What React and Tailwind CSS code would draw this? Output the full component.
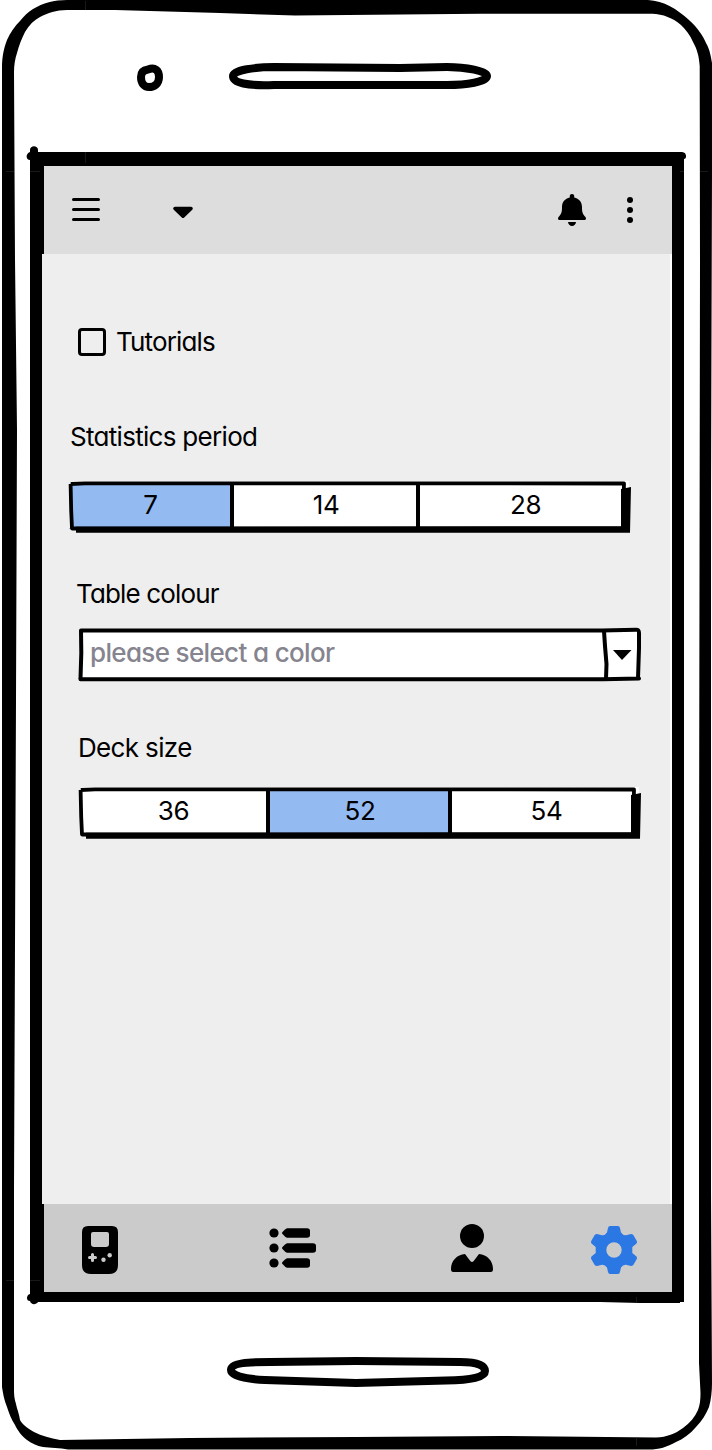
import React from "react";

const FONT = "font-['Inter','Noto_Sans',sans-serif] [font-feature-settings:'cv11']";

function DeviceFrame() {
  return (
    <svg className="absolute inset-0" width="712" height="1450" viewBox="0 0 712 1450" aria-hidden="true">
      <path
        fillRule="evenodd"
        d="M2 68C2 56 4 48 7 40C10 33 15 26 20 21C24 16 28 12 33 9C43 3 54 0 67 0L648 0C664 1 677 9 689 20C698 28 703 36 706 43C710 50 711 57 712 63L712 170L711 500V1190L712 1383C712 1391 711 1400 709 1407C706 1414 702 1421 696 1427C690 1434 683 1439 676 1442C667 1447 659 1449.500 649 1449.500H68C60 1448 50 1448 43 1447C37 1446 31 1443 27 1440C21 1435 18 1431 15 1425C11 1419 9 1413 7 1407C4 1400 3 1393 2 1387Z
        M14 72C14 65 15 59 17 53C19 45 22 38 25 32C29 25 34 20 40 17C48 13 56 10 67 10L115 10L220 13L295 15.500L480 13.700H652C663 14 673 18 681 25C686 30 690 35 693 42C697 49 699 56 699.700 66L700 260L699 900V1363L700.500 1393C700.500 1399 700 1405 698 1410C695 1417 690 1423 683 1428C675 1434 667 1437 656 1437.500L500 1436L356 1437L190 1438L60 1440C50 1438 42 1436 34 1432C27 1428 22 1424 20 1420C19 1413 17 1409 16 1404C14 1398 14 1394 14 1388V1190L16 700L17 430L15 260Z"
      />
      <path d="M30 150C30 145 38 145 38 150V152H682C687 152 687 159 684 159V1302H680V1303H640L600 1302H38C36 1305 31 1305 30 1301C26 1301 26 1295 30 1294V160C26 160 25 154 30 152Z" />
      <path d="M148 69.500C155 67 159 70 159 77C159 84 154 87 149 87C144 87 141 83 141 77C141 72 144 70 148 69.500Z" fill="none" stroke="#000" strokeWidth="8" />
      <path d="M274 67L400 68L447 67C466 67 487 71 487 76C487 82 466 85 447 85L274 85C247 86 233 83 233 76C233 70 256 67 274 67Z" fill="none" stroke="#000" strokeWidth="8" />
      <path d="M270 1362L356 1361L460 1362C478 1362 485 1366 485 1371C485 1377 472 1380 446 1380.500L356 1383L265 1380C243 1379 231 1375 231 1370C231 1363 248 1362 270 1362Z" fill="none" stroke="#000" strokeWidth="8" />
      <path d="M85.500 1V10M6 171.500H14M30 171.500H40M680 171.500H684M700 171.500H708M6 1280.500H14M30 1280.500H40M636.500 1297V1302M636.500 1437V1446M85.500 152V163" stroke="#333" strokeWidth=".5" />
    </svg>
  );
}

function Caret() {
  return (
    <svg width="22" height="14" viewBox="0 0 22 14">
      <path d="M3 2.500H19L11 10.200Z" stroke="#000" strokeWidth="3.600" strokeLinejoin="round" />
    </svg>
  );
}

function TopBar() {
  return (
    <header className="ml-0.5 flex h-[88px] w-[628px] items-center bg-[#ddd] pl-7">
      <svg width="28" height="26" viewBox="0 0 28 26">
        <path d="M1.500 2.500H26.500M1.500 12.500H26.500M1.500 22.500H26.500" stroke="#000" strokeWidth="3" strokeLinecap="round" />
      </svg>
      <div className="ml-[72px] mt-1.5">
        <Caret />
      </div>
      <svg className="ml-[364px]" width="28" height="32" viewBox="0 0 28 32">
        <path d="M14 0C16 0 16.400 1.500 16.200 3.500C21 4.500 24 8 24 13C24 18 24.500 19.500 27 22.500C28.800 24.500 28 26 26 26H2C0 26-.800 24.500 1 22.500C3.500 19.500 4 18 4 13C4 8 7 4.500 11.800 3.500C11.600 1.500 12 0 14 0ZM10 28H18C18 30 16 32 14 32S10 30 10 28Z" />
      </svg>
      <svg className="ml-[41px]" width="6" height="26" viewBox="0 0 6 26">
        <circle cx="3" cy="3" r="3" />
        <circle cx="3" cy="13" r="3" />
        <circle cx="3" cy="23" r="3" />
      </svg>
    </header>
  );
}

function Segments({ cells, dividers }) {
  return (
    <div className="relative h-[52px] w-[562px]">
      <div className="flex h-[48px] w-[560px] bg-[linear-gradient(to_right,transparent_2px,white_0)] pt-0.5">
        {cells.map((c) => (
          <div key={c.label} className={`flex shrink-0 items-center justify-center ${c.width} ${c.active ? "bg-[#94baf2]" : ""}`}>
            <span className="-mt-0.5 text-[26px] leading-none tracking-[-0.4px]">{c.label}</span>
          </div>
        ))}
      </div>
      <svg className="absolute inset-0 overflow-visible" width="562" height="52" viewBox="0 0 562 52" aria-hidden="true">
        <path d="M0 0H1V47H0Z" fill="#eee" />
        <path d="M1.800 3L16 2.300L555 2.500L554 47L3 47.500L2.200 30L1.600 3" fill="none" stroke="#000" strokeWidth="3.800" strokeLinejoin="round" />
        <path d="M7 45.700H552V8L562 6L561 51.800H7Z" />
        {dividers.map((x) => (
          <path key={x} d={`M${x} 3V47`} stroke="#000" strokeWidth="4" />
        ))}
      </svg>
    </div>
  );
}

function ColourSelect() {
  return (
    <div className="relative h-[53px] w-[563px] p-0.5">
      <div className="flex h-[49px] items-center bg-white pl-[10px]">
        <span className="-mt-[3px] text-[26px] font-medium leading-none tracking-[-0.65px] text-[#85848f]">please select a color</span>
      </div>
      <svg className="absolute inset-0 overflow-visible" width="563" height="53" viewBox="0 0 563 53" aria-hidden="true">
        <path d="M3 2.500L524 2.500L558 1.800C560 1.800 561 2 561 5V20L560 50.500M2.500 51.300L525 51.300L561 50.500" fill="none" stroke="#000" strokeWidth="4" strokeLinecap="round" />
        <path d="M3 2.500L3.300 25L2.500 51M526 3L527 18L528.500 36L528 51" fill="none" stroke="#000" strokeWidth="4" />
        <path d="M535 22H553.500L544 32Z" />
      </svg>
    </div>
  );
}

function NavBar() {
  return (
    <nav className="ml-0.5 flex h-[88px] w-[628px] items-center bg-[#cbcbcb] pl-[38px]">
      <svg className="mt-1" width="36" height="48" viewBox="0 0 36 48">
        <path
          fillRule="evenodd"
          d="M6 0H30Q36 0 36 6V39Q36 48 27 48H9Q0 48 0 39V6Q0 0 6 0ZM11 6Q9 6 9 8V18Q9 21 12 21H24Q27 21 27 18V8Q27 6 25 6Z"
        />
        <path d="M10.500 28.500V34.500M7.500 31.500H13.500" stroke="#cbcbcb" strokeWidth="3" strokeLinecap="round" />
        <circle cx="21.500" cy="33.700" r="2.200" fill="#cbcbcb" />
        <circle cx="27.700" cy="29.300" r="2.200" fill="#cbcbcb" />
      </svg>
      <svg className="ml-[151px]" width="47" height="40" viewBox="0 0 47 40">
        {[5, 20, 35].map((y) => (
          <circle key={y} cx="5" cy={y} r="4.600" />
        ))}
        <path d="M18 .3H38Q41 .3 41 3V7Q41 9.700 38 9.700H18Q16 9 14 6.500Q12 5 14 3.500Q16 1 18 .3ZM18 15.300H44Q47 15.300 47 18V22Q47 24.700 44 24.700H18Q16 24 14 21.500Q12 20 14 18.500Q16 16 18 15.300ZM18 30.300H38Q41 30.300 41 33V37Q41 39.700 38 39.700H18Q16 39 14 36.500Q12 35 14 33.500Q16 31 18 30.300Z" />
      </svg>
      <svg className="ml-[135px]" width="42" height="48" viewBox="0 0 42 48">
        <circle cx="21" cy="12" r="12" />
        <path d="M14 30L19.500 37.300Q21 38.800 22.500 37.300L28 30C36 30.500 42 37 42 45Q42 48 40 48H2Q0 48 0 45C0 37 6 30.500 14 30Z" />
      </svg>
      <svg className="ml-[98px] mt-1" width="46" height="48" viewBox="-23 -24 46 48" fill="#2b78e4">
        <path
          fillRule="evenodd"
          d="M-4-24H4Q5.500-24 6-22L7-17.500Q9-14.500 12-14.700L17-16Q18.500-16 19.300-15L22.500-9.500Q23.500-8 22.500-6.500L18.300-3V3L22.500 6.500Q23.500 8 22.500 9.500L19.300 15Q18.500 16 17 16L12 14.700Q9 14.500 7 17.500L6 22Q5.500 24 4 24H-4Q-5.500 24-6 22L-7 17.500Q-9 14.500-12 14.700L-17 16Q-18.500 16-19.300 15L-22.500 9.500Q-23.500 8-22.500 6.500L-18.300 3V-3L-22.500-6.500Q-23.500-8-22.500-9.500L-19.300-15Q-18.500-16-17-16L-12-14.700Q-9-14.500-7-17.500L-6-22Q-5.500-24-4-24ZM0-7.700A7.700 7.700 0 1 0 0 7.700A7.700 7.700 0 1 0 0-7.700Z"
        />
      </svg>
    </nav>
  );
}

export default function App() {
  return (
    <div className={`relative h-[1450px] w-[712px] overflow-hidden bg-white text-black ${FONT}`}>
      <DeviceFrame />
      <div className="relative ml-[42px] flex w-[630px] flex-col pt-[166px]">
        <TopBar />
        <div className="w-[630px] bg-white">
          <main className="flex h-[950px] w-[628px] flex-col items-start bg-[#eee] pl-[27px] pt-[74px]">
            <label className="ml-[9px] flex h-7 items-center">
              <span className="h-7 w-7 rounded-[4px] border-3 border-black" />
              <span className="ml-[10px] text-[26px] leading-none tracking-[-0.85px]">Tutorials</span>
            </label>
            <h2 className="ml-px mt-[67px] text-[26px] leading-[28px] tracking-[-0.7px]">Statistics period</h2>
            <div className="mt-[30px]">
              <Segments
                cells={[
                  { label: "7", width: "w-[163px]", active: true },
                  { label: "14", width: "w-[188px]" },
                  { label: "28", width: "w-[211px]" },
                ]}
                dividers={[163, 349]}
              />
            </div>
            <h2 className="ml-[7px] mt-[47px] text-[26px] leading-[28px] tracking-[-0.85px]">Table colour</h2>
            <div className="ml-[9px] mt-[20px]">
              <ColourSelect />
            </div>
            <h2 className="ml-[9px] mt-[53px] text-[26px] leading-[28px] tracking-[-0.65px]">Deck size</h2>
            <div className="ml-[10px] mt-[25px]">
              <Segments
                cells={[
                  { label: "36", width: "w-[189px]" },
                  { label: "52", width: "w-[184px]", active: true },
                  { label: "54", width: "w-[189px]" },
                ]}
                dividers={[189, 371]}
              />
            </div>
          </main>
        </div>
        <NavBar />
      </div>
    </div>
  );
}
